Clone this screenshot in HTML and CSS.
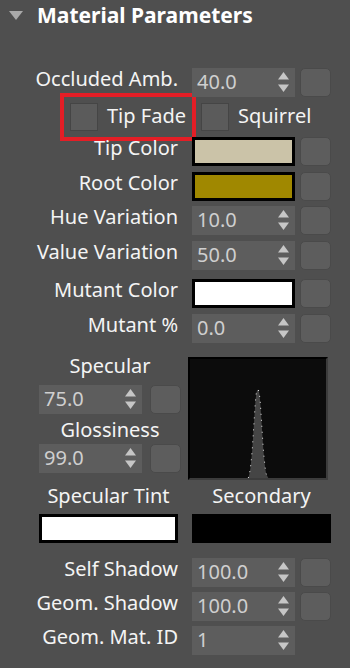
FILE: index.html
```html
<!DOCTYPE html>
<html>

<head>
    <title>Material Parameters</title>
    <link rel="stylesheet" href="styles.css">
</head>

<body>
    <div class="rollout">
        <div class="rollout-head">
            <span class="arrow"></span>
            <span class="title">Material Parameters</span>
        </div>

        <div class="params">
            <div class="row">
                <label>Occluded Amb.</label>
                <div class="spin">40.0<svg class="spin-arrows" viewBox="0 0 11 20"><path d="M0 7.5L5.5 0L11 7.5Z"/><path d="M0 12.5L11 12.5L5.5 20Z"/></svg></div>
                <div class="map-btn"></div>
            </div>

            <div class="row checks">
                <div class="check-item marked">
                    <span class="check"></span>
                    <span>Tip Fade</span>
                </div>
                <div class="check-item">
                    <span class="check"></span>
                    <span>Squirrel</span>
                </div>
            </div>

            <div class="row">
                <label>Tip Color</label>
                <div class="swatch tip"></div>
                <div class="map-btn"></div>
            </div>
            <div class="row">
                <label>Root Color</label>
                <div class="swatch root"></div>
                <div class="map-btn"></div>
            </div>
            <div class="row">
                <label>Hue Variation</label>
                <div class="spin">10.0<svg class="spin-arrows" viewBox="0 0 11 20"><path d="M0 7.5L5.5 0L11 7.5Z"/><path d="M0 12.5L11 12.5L5.5 20Z"/></svg></div>
                <div class="map-btn"></div>
            </div>
            <div class="row">
                <label>Value Variation</label>
                <div class="spin">50.0<svg class="spin-arrows" viewBox="0 0 11 20"><path d="M0 7.5L5.5 0L11 7.5Z"/><path d="M0 12.5L11 12.5L5.5 20Z"/></svg></div>
                <div class="map-btn"></div>
            </div>
            <div class="row spaced">
                <label>Mutant Color</label>
                <div class="swatch white"></div>
                <div class="map-btn"></div>
            </div>
            <div class="row">
                <label>Mutant %</label>
                <div class="spin">0.0<svg class="spin-arrows" viewBox="0 0 11 20"><path d="M0 7.5L5.5 0L11 7.5Z"/><path d="M0 12.5L11 12.5L5.5 20Z"/></svg></div>
                <div class="map-btn"></div>
            </div>
        </div>

        <div class="specular">
            <div class="spec-left">
                <div class="sub-label">Specular</div>
                <div class="spec-ctrl">
                    <div class="spin">75.0<svg class="spin-arrows" viewBox="0 0 11 20"><path d="M0 7.5L5.5 0L11 7.5Z"/><path d="M0 12.5L11 12.5L5.5 20Z"/></svg></div>
                    <div class="map-btn"></div>
                </div>
                <div class="sub-label gloss">Glossiness</div>
                <div class="spec-ctrl">
                    <div class="spin">99.0<svg class="spin-arrows" viewBox="0 0 11 20"><path d="M0 7.5L5.5 0L11 7.5Z"/><path d="M0 12.5L11 12.5L5.5 20Z"/></svg></div>
                    <div class="map-btn"></div>
                </div>
            </div>
            <div class="graph">
                <svg viewBox="0 0 136 119" width="136" height="119">
                    <polygon class="curve" points="58.3,119 59.3,115.3 60.3,110 61.3,101 62.3,90 63.3,75 64.3,59 65.3,44 66.3,34 67.3,31 68.3,30.7 69.3,34 70.3,44 71.3,59 72.3,75 73.3,90 74.3,101 75.3,110 76.3,115.3 78.3,119"/>
                    <polyline class="dots" points="58.3,119 59.3,115.3 60.3,110 61.3,101 62.3,90 63.3,75 64.3,59 65.3,44 66.3,34 67.3,31 68.3,30.7 69.3,34 70.3,44 71.3,59 72.3,75 73.3,90 74.3,101 75.3,110 76.3,115.3 78.3,119"/>
                </svg>
            </div>
        </div>

        <div class="tints">
            <div class="tint">
                <div class="sub-label">Specular Tint</div>
                <div class="swatch white wide"></div>
            </div>
            <div class="tint">
                <div class="sub-label">Secondary</div>
                <div class="swatch black wide"></div>
            </div>
        </div>

        <div class="params bottom">
            <div class="row">
                <label>Self Shadow</label>
                <div class="spin">100.0<svg class="spin-arrows" viewBox="0 0 11 20"><path d="M0 7.5L5.5 0L11 7.5Z"/><path d="M0 12.5L11 12.5L5.5 20Z"/></svg></div>
                <div class="map-btn"></div>
            </div>
            <div class="row">
                <label>Geom. Shadow</label>
                <div class="spin">100.0<svg class="spin-arrows" viewBox="0 0 11 20"><path d="M0 7.5L5.5 0L11 7.5Z"/><path d="M0 12.5L11 12.5L5.5 20Z"/></svg></div>
                <div class="map-btn"></div>
            </div>
            <div class="row">
                <label>Geom. Mat. ID</label>
                <div class="spin">1<svg class="spin-arrows" viewBox="0 0 11 20"><path d="M0 7.5L5.5 0L11 7.5Z"/><path d="M0 12.5L11 12.5L5.5 20Z"/></svg></div>
            </div>
        </div>
    </div>
</body>

</html>
```

FILE: styles.css
```css
body {
    margin: 0;
    background: #4f4f4f;
    font-family: "Noto Sans", "Open Sans", sans-serif;
    font-size: 20px;
    color: #f4f4f4;
}

.rollout {
    width: 350px;
    height: 668px;
    overflow: hidden;
}

.rollout-head {
    display: flex;
    align-items: center;
    height: 34px;
    padding-left: 9px;
}

.arrow {
    width: 0;
    height: 0;
    border-left: 7px solid transparent;
    border-right: 7px solid transparent;
    border-top: 9px solid #a9a9a9;
    margin-right: 14px;
    margin-top: -3px;
}

.title {
    font-weight: bold;
    font-size: 21px;
    line-height: 30px;
    color: #ffffff;
    margin-top: -4px;
}

.params {
    display: flex;
    flex-direction: column;
    gap: 5.5px;
    margin-top: 34px;
}

.params.bottom {
    margin-top: 15px;
    gap: 5px;
}

.row {
    display: flex;
    align-items: flex-start;
    height: 29px;
}

.row.spaced {
    margin-top: 4px;
}

.row label {
    width: 178px;
    text-align: right;
    line-height: 22px;
    margin-right: 14px;
    white-space: nowrap;
}

.spin {
    position: relative;
    width: 103px;
    height: 29px;
    box-sizing: border-box;
    padding: 3px 0 0 5px;
    line-height: 22px;
    background: #5d5d5d;
    color: #cfcfcf;
}

.spin-arrows {
    position: absolute;
    right: 6px;
    top: 4px;
    width: 11px;
    height: 20px;
    fill: #c6c6c6;
}

.map-btn {
    width: 31px;
    height: 29px;
    box-sizing: border-box;
    margin-left: 5px;
    border: 1px solid #4a4a4a;
    border-radius: 5px;
    background: #5d5d5d;
}

.swatch {
    width: 103px;
    height: 29px;
    box-sizing: border-box;
    border: 3px solid #000000;
}

.swatch.tip {
    background: #cbc3a8;
}

.swatch.root {
    background: #a08800;
}

.swatch.white {
    background: #ffffff;
}

.swatch.black {
    background: #000000;
}

.swatch.wide {
    width: 139px;
}

/* checkbox row */
.checks {
    padding-left: 70px;
    gap: 15px;
}

.check-item {
    display: flex;
    align-items: flex-start;
    gap: 9px;
    line-height: 22px;
}

.check-item span:last-child {
    padding-top: 2px;
}

.check-item.marked {
    outline: 4px solid #e41e26;
    outline-offset: 6px;
}

.check {
    width: 28px;
    height: 28px;
    box-sizing: border-box;
    border: 1px solid #454545;
    background: #5b5b5b;
}

/* specular block */
.specular {
    display: flex;
    margin-top: 14px;
    padding-left: 39px;
    gap: 7px;
}

.spec-left {
    width: 142px;
    display: flex;
    flex-direction: column;
}

.sub-label {
    text-align: center;
    line-height: 22px;
    white-space: nowrap;
}

.spec-left .sub-label {
    margin-top: -2px;
    margin-bottom: 8px;
}

.spec-left .sub-label.gloss {
    margin-top: 5px;
    margin-bottom: 3px;
}

.spec-ctrl {
    display: flex;
    gap: 3px;
}

.spec-ctrl .map-btn {
    margin-left: 5px;
}

.graph {
    width: 140px;
    height: 123px;
    box-sizing: border-box;
    border-top: 2px solid #000000;
    border-left: 2px solid #000000;
    border-right: 2px solid #3c3c3c;
    border-bottom: 2px solid #3c3c3c;
    background: #0c0c0c;
}

.graph svg {
    display: block;
}

.curve {
    fill: #454545;
}

.dots {
    fill: none;
    stroke: #e8e8e8;
    stroke-width: 1;
    stroke-dasharray: 1 5;
}

/* tint swatches */
.tints {
    display: flex;
    gap: 14px;
    padding-left: 39px;
    margin-top: 5px;
}

.tint .sub-label {
    margin-bottom: 7px;
}
```
